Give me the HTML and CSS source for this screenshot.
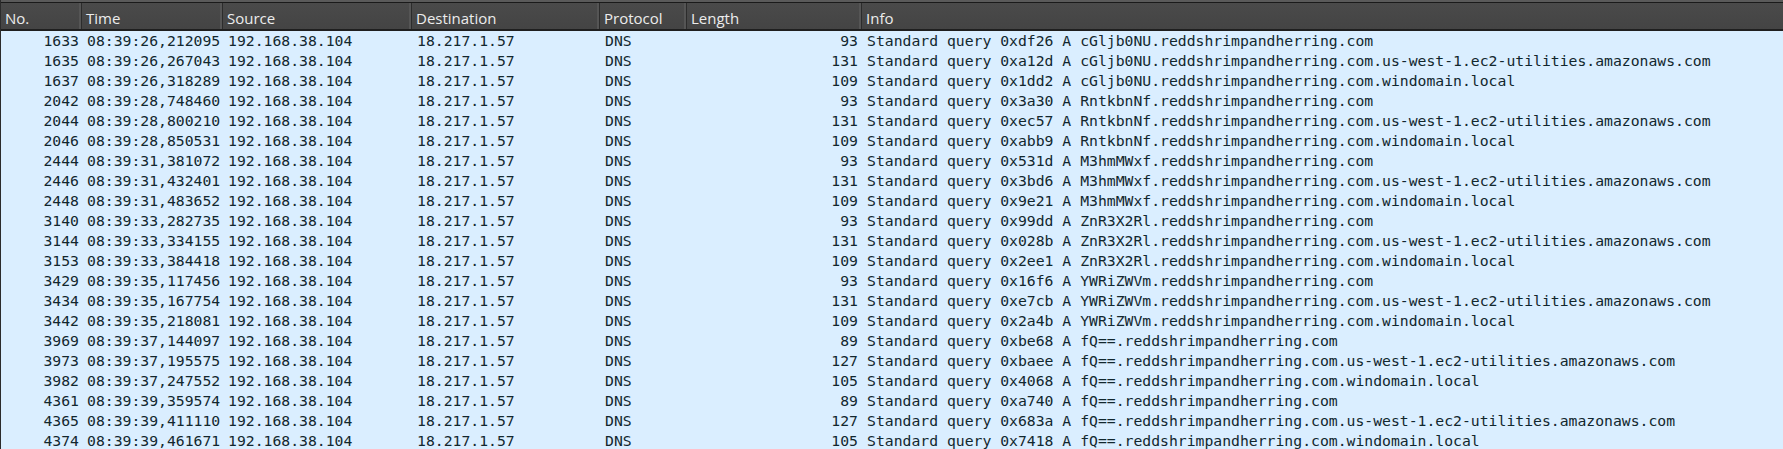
FILE: index.html
```html
<!DOCTYPE html>
<html>
<head>
<meta charset="utf-8">
<link rel="stylesheet" href="styles.css">
</head>
<body>
<div class="pane">
  <div class="topstrip"></div>
  <div class="header">
    <div class="hc">No.</div>
    <div class="hc">Time</div>
    <div class="hc">Source</div>
    <div class="hc">Destination</div>
    <div class="hc">Protocol</div>
    <div class="hc">Length</div>
    <div class="hc last">Info</div>
  </div>
  <div class="rows" id="rows"></div>
</div>
<script src="app.js"></script>
</body>
</html>
```
FILE: app.js
```js
const data = [
  ["1633","08:39:26,212095","93","0xdf26","cGljb0NU.reddshrimpandherring.com"],
  ["1635","08:39:26,267043","131","0xa12d","cGljb0NU.reddshrimpandherring.com.us-west-1.ec2-utilities.amazonaws.com"],
  ["1637","08:39:26,318289","109","0x1dd2","cGljb0NU.reddshrimpandherring.com.windomain.local"],
  ["2042","08:39:28,748460","93","0x3a30","RntkbnNf.reddshrimpandherring.com"],
  ["2044","08:39:28,800210","131","0xec57","RntkbnNf.reddshrimpandherring.com.us-west-1.ec2-utilities.amazonaws.com"],
  ["2046","08:39:28,850531","109","0xabb9","RntkbnNf.reddshrimpandherring.com.windomain.local"],
  ["2444","08:39:31,381072","93","0x531d","M3hmMWxf.reddshrimpandherring.com"],
  ["2446","08:39:31,432401","131","0x3bd6","M3hmMWxf.reddshrimpandherring.com.us-west-1.ec2-utilities.amazonaws.com"],
  ["2448","08:39:31,483652","109","0x9e21","M3hmMWxf.reddshrimpandherring.com.windomain.local"],
  ["3140","08:39:33,282735","93","0x99dd","ZnR3X2Rl.reddshrimpandherring.com"],
  ["3144","08:39:33,334155","131","0x028b","ZnR3X2Rl.reddshrimpandherring.com.us-west-1.ec2-utilities.amazonaws.com"],
  ["3153","08:39:33,384418","109","0x2ee1","ZnR3X2Rl.reddshrimpandherring.com.windomain.local"],
  ["3429","08:39:35,117456","93","0x16f6","YWRiZWVm.reddshrimpandherring.com"],
  ["3434","08:39:35,167754","131","0xe7cb","YWRiZWVm.reddshrimpandherring.com.us-west-1.ec2-utilities.amazonaws.com"],
  ["3442","08:39:35,218081","109","0x2a4b","YWRiZWVm.reddshrimpandherring.com.windomain.local"],
  ["3969","08:39:37,144097","89","0xbe68","fQ==.reddshrimpandherring.com"],
  ["3973","08:39:37,195575","127","0xbaee","fQ==.reddshrimpandherring.com.us-west-1.ec2-utilities.amazonaws.com"],
  ["3982","08:39:37,247552","105","0x4068","fQ==.reddshrimpandherring.com.windomain.local"],
  ["4361","08:39:39,359574","89","0xa740","fQ==.reddshrimpandherring.com"],
  ["4365","08:39:39,411110","127","0x683a","fQ==.reddshrimpandherring.com.us-west-1.ec2-utilities.amazonaws.com"],
  ["4374","08:39:39,461671","105","0x7418","fQ==.reddshrimpandherring.com.windomain.local"]
];
const rows = document.getElementById("rows");
for (const [no, time, len, id, name] of data) {
  const r = document.createElement("div");
  r.className = "row";
  const cells = [
    ["c num", no], ["c", time], ["c", "192.168.38.104"], ["c", "18.217.1.57"],
    ["c", "DNS"], ["c num len", len], ["c", "Standard query " + id + " A " + name]
  ];
  for (const [cls, txt] of cells) {
    const d = document.createElement("div");
    d.className = cls;
    d.textContent = txt;
    r.appendChild(d);
  }
  rows.appendChild(r);
}
```
FILE: styles.css
```css
html, body {
  margin: 0;
  padding: 0;
  overflow: hidden;
  background: #daeeff;
}
.pane {
  --cols: 81px 141px 189px 188px 87px 175px 1fr;
  border-left: 1px solid #2b2b2b;
  height: 449px;
  overflow: hidden;
}
.topstrip {
  height: 2px;
  background: #5a5a5a;
  border-bottom: 1px solid #1a1a1a;
}
.header {
  display: grid;
  grid-template-columns: var(--cols);
  height: 26px;
  background: linear-gradient(#4a4a4a, #444444);
  border-bottom: 2px solid #1f1f1f;
}
.hc {
  font-family: "Open Sans", "Noto Sans", sans-serif;
  font-size: 15px;
  color: #ececec;
  line-height: 26px;
  padding: 2px 0 0 4px;
  box-sizing: border-box;
  border-right: 1px solid #2c2c2c;
  box-shadow: inset -2px 0 0 #555555;
  white-space: nowrap;
  overflow: hidden;
}
.hc.last {
  border-right: none;
  box-shadow: none;
}
.rows {
  font-family: "DejaVu Sans Mono", "Liberation Mono", monospace;
  font-size: 14.75px;
  color: #12272e;
}
.row {
  display: grid;
  grid-template-columns: var(--cols);
  height: 20px;
  line-height: 20px;
}
.c {
  padding-left: 5px;
  white-space: nowrap;
  overflow: hidden;
}
.c.num {
  padding-left: 0;
  padding-right: 3px;
  text-align: right;
}
.c.len {
  padding-right: 4px;
}
```
